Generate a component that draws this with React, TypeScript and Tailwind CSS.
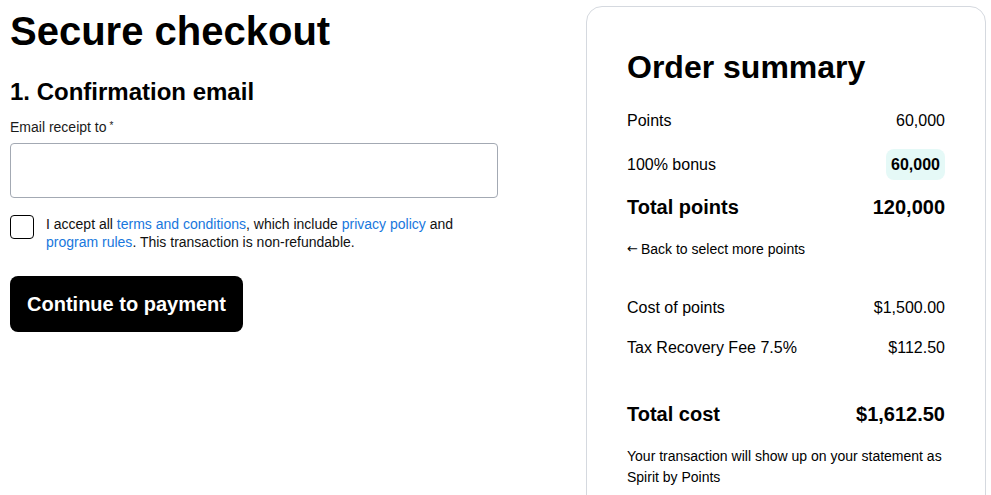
export default function App() {
  return (
    <div className="flex h-[495px] overflow-hidden bg-white pl-[10px] pr-[5px] pt-[6px] font-['Liberation_Sans',Arial,sans-serif] text-black">
      {/* left: form */}
      <div className="flex w-[488px] flex-col pt-[1px]">
        <h1 className="text-[40px] font-bold leading-[48px]">Secure checkout</h1>
        <h2 className="mt-[21px] text-[24px] font-bold leading-[32px]">1. Confirmation email</h2>
        <label className="mt-[9px] text-[14px] leading-[20px] text-[#1a1a1a]">
          Email receipt to<sup className="relative top-[-3px] ml-[3px] text-[10px]">*</sup>
        </label>
        <input
          type="email"
          className="mt-[6px] h-[55px] w-full rounded-[4px] border border-[#a3a9b3] px-3 text-[16px] outline-none"
        />
        <div className="mt-[17px] flex items-start gap-3">
          <div className="h-6 w-6 shrink-0 rounded-[4px] border border-black" />
          <p className="text-[14px] leading-[18px] text-[#111]">
            I accept all <a className="text-[#1877dd]">terms and conditions</a>, which include{' '}
            <a className="text-[#1877dd]">privacy policy</a> and
            <br />
            <a className="text-[#1877dd]">program rules</a>. This transaction is non-refundable.
          </p>
        </div>
        <button className="mt-[25px] flex h-[56px] w-[233px] items-center justify-center rounded-[8px] bg-black text-[20px] font-bold text-white">
          Continue to payment
        </button>
      </div>

      {/* right: order summary */}
      <div className="ml-auto h-[540px] w-[400px] shrink-0 rounded-[16px] border border-[#d5d9df] px-[40px] pt-[40px]">
        <h2 className="text-[32px] font-bold leading-[40px]">Order summary</h2>
        <div className="mt-[12px] flex h-[44px] items-center justify-between text-[16px]">
          <span>Points</span>
          <span>60,000</span>
        </div>
        <div className="flex h-[43px] items-center justify-between text-[16px]">
          <span>100% bonus</span>
          <span className="rounded-[8px] bg-[#e5f9f7] px-[5px] py-[6px] font-bold leading-[19px]">60,000</span>
        </div>
        <div className="flex h-[42px] items-center justify-between text-[20px] font-bold">
          <span>Total points</span>
          <span>120,000</span>
        </div>
        <div className="mt-[11px] flex items-center text-[14px] leading-[20px]">
          <span className="mr-[3px] font-['DejaVu_Sans',sans-serif] text-[13px]">←</span>
          Back to select more points
        </div>
        <div className="mt-[29px] flex h-[40px] items-center justify-between text-[16px]">
          <span>Cost of points</span>
          <span>$1,500.00</span>
        </div>
        <div className="flex h-[40px] items-center justify-between text-[16px]">
          <span>Tax Recovery Fee 7.5%</span>
          <span>$112.50</span>
        </div>
        <div className="mt-[26px] flex h-[40px] items-center justify-between text-[20px] font-bold">
          <span>Total cost</span>
          <span>$1,612.50</span>
        </div>
        <p className="mt-[12px] text-[14px] leading-[21px]">
          Your transaction will show up on your statement as Spirit by Points
        </p>
      </div>
    </div>
  )
}
